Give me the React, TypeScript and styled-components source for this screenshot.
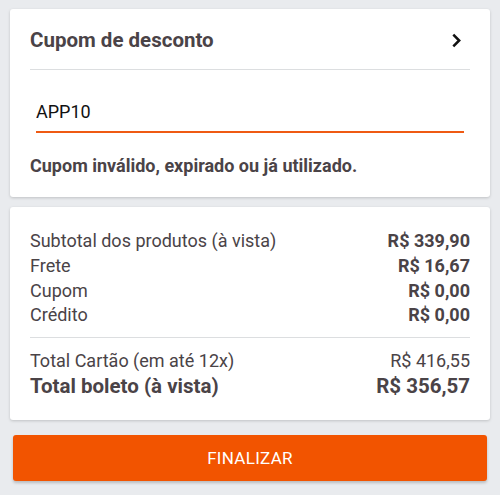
import React from 'react'
import styled, { createGlobalStyle } from 'styled-components'

const GlobalStyle = createGlobalStyle`
body {
    margin: 0;
    background: #e9ebee;
    font-family: Roboto, "Liberation Sans", sans-serif;
    color: #4a4347;
}
`
const Page = styled.div`
width : 500px;
height : 495px;
box-sizing : border-box;
padding : 9px 10px 0;
display : flex;
flex-direction : column;
gap : 10px;
`
const Card = styled.div`
background : #fff;
border-radius : 3px;
box-shadow : 0 1px 3px rgba(0, 0, 0, 0.18);
padding : 0 20px;
`
const CouponHeader = styled.div`
height : 61px;
display : flex;
justify-content : space-between;
align-items : center;
border-bottom : 1px solid #dcdee0;
padding-top : 2px;
box-sizing : border-box;
`
const Title = styled.div`
font-size : 20.5px;
font-weight : 700;
color : #4a4347;
`
const CouponInput = styled.input`
display : block;
width : calc(100% - 12px);
margin : 30px 6px 0;
box-sizing : border-box;
border : none;
border-bottom : 2px solid #ef5a13;
padding : 0 0 9px;
font-family : inherit;
font-size : 18px;
line-height : 22px;
height : 33px;
color : #111;
outline : none;
background : transparent;
`
const ErrorText = styled.div`
font-size : 18px;
line-height : 22px;
font-weight : 700;
padding : 22px 0 20px;
color : #4a4347;
`
const Summary = styled(Card)`
padding : 21.5px 20px 21.5px;
`
const Row = styled.div<{ big?: boolean }>`
display : flex;
justify-content : space-between;
align-items : center;
height : ${p => (p.big ? '26px' : '24.7px')};
font-size : ${p => (p.big ? '20.5px' : '18px')};
font-weight : ${p => (p.big ? 700 : 400)};
`
const Value = styled.span<{ light?: boolean }>`
font-weight : ${p => (p.light ? 400 : 700)};
`
const Divider = styled.div`
height : 1px;
background : #dcdee0;
margin : 9.5px 0 10.5px;
`
const FinishButton = styled.button`
margin : 5px 3px 0;
height : 46px;
border : none;
border-radius : 3px;
background : #f25400;
color : #fff;
font-family : inherit;
font-size : 17px;
letter-spacing : 0.3px;
box-shadow : 0 2px 3px rgba(0, 0, 0, 0.2);
`

function App() {
    return (
        <Page>
            <GlobalStyle />
            <Card>
                <CouponHeader>
                    <Title>Cupom de desconto</Title>
                    <svg width="17" height="17" viewBox="0 0 16 16" style={{ marginRight: 5 }}>
                        <path d="M5 2.5 L10.5 8 L5 13.5" fill="none" stroke="#111" strokeWidth="2.4" />
                    </svg>
                </CouponHeader>
                <CouponInput defaultValue="APP10" />
                <ErrorText>Cupom inválido, expirado ou já utilizado.</ErrorText>
            </Card>
            <Summary>
                <Row><span>Subtotal dos produtos (à vista)</span><Value>R$ 339,90</Value></Row>
                <Row><span>Frete</span><Value>R$ 16,67</Value></Row>
                <Row><span>Cupom</span><Value>R$ 0,00</Value></Row>
                <Row><span>Crédito</span><Value>R$ 0,00</Value></Row>
                <Divider />
                <Row><span>Total Cartão (em até 12x)</span><Value light>R$ 416,55</Value></Row>
                <Row big><span>Total boleto (à vista)</span><Value>R$ 356,57</Value></Row>
            </Summary>
            <FinishButton>FINALIZAR</FinishButton>
        </Page>
    )
}

export default App
